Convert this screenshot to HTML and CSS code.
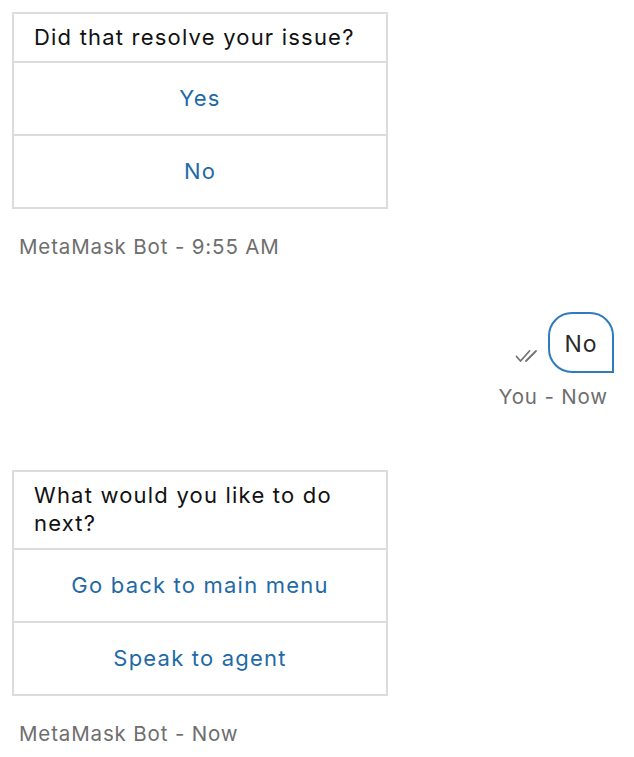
FILE: index.html
```html
<!DOCTYPE html>
<html>
<head>
<meta charset="utf-8">
<link rel="stylesheet" href="styles.css">
</head>
<body>
<div class="chat">
  <div class="bot">
    <div class="card">
      <div class="card-head">Did that resolve your issue?</div>
      <div class="card-opt">Yes</div>
      <div class="card-opt">No</div>
    </div>
    <div class="meta">MetaMask Bot - 9:55 AM</div>
  </div>

  <div class="user">
    <div class="user-row">
      <svg class="ticks" width="24" height="14" viewBox="0 0 24 14" fill="none" stroke="#737373" stroke-width="1.8" stroke-linecap="round" stroke-linejoin="round">
        <path d="M1.5 7.5 L5.5 12 L14.5 2"/>
        <path d="M11 12 L21 2"/>
      </svg>
      <div class="bubble">No</div>
    </div>
    <div class="meta meta-right">You - Now</div>
  </div>

  <div class="bot bot2">
    <div class="card">
      <div class="card-head">What would you like to do next?</div>
      <div class="card-opt">Go back to main menu</div>
      <div class="card-opt">Speak to agent</div>
    </div>
    <div class="meta">MetaMask Bot - Now</div>
  </div>
</div>
</body>
</html>
```

FILE: styles.css
```css
html, body {
  margin: 0;
  padding: 0;
  background: #ffffff;
}
body {
  font-family: Inter, "Noto Sans", "Liberation Sans", sans-serif;
  color: #111111;
}
.chat {
  display: flex;
  flex-direction: column;
  padding: 12px 20px 0 12px;
}
.bot {
  display: flex;
  flex-direction: column;
  align-items: flex-start;
}
.card {
  width: 372px;
  border: 2px solid #dcdcdc;
  display: flex;
  flex-direction: column;
  background: #fff;
}
.card-head {
  font-size: 22px;
  line-height: 28px;
  letter-spacing: 1.2px;
  padding: 9px 30px 10px 20px;
  color: #111;
}
.card-opt {
  border-top: 2px solid #dcdcdc;
  height: 71px;
  padding-bottom: 2px;
  box-sizing: border-box;
  height: 73px;
  display: flex;
  align-items: center;
  justify-content: center;
  font-size: 22px;
  letter-spacing: 1.2px;
  color: #1f6aa6;
}
.meta {
  font-size: 20.5px;
  line-height: 24px;
  letter-spacing: 0.85px;
  color: #6e6e6e;
  margin-top: 26px;
  padding-left: 7px;
}
.user {
  margin-top: 53px;
  display: flex;
  flex-direction: column;
  align-items: flex-end;
}
.user-row {
  display: flex;
  align-items: flex-end;
  gap: 9px;
}
.ticks {
  margin-bottom: 10px;
}
.bubble {
  width: 62px;
  height: 55px;
  padding-top: 2px;
  border: 2px solid #2d7bbd;
  border-radius: 24px 24px 0 24px;
  display: flex;
  align-items: center;
  justify-content: center;
  font-size: 23px;
  letter-spacing: 1px;
  color: #2a2a2a;
}
.meta-right {
  margin-top: 12px;
  padding-left: 0;
  margin-right: 6px;
}
.bot2 {
  margin-top: 61px;
}
.bot2 .card-head {
  padding-bottom: 11px;
}
```
